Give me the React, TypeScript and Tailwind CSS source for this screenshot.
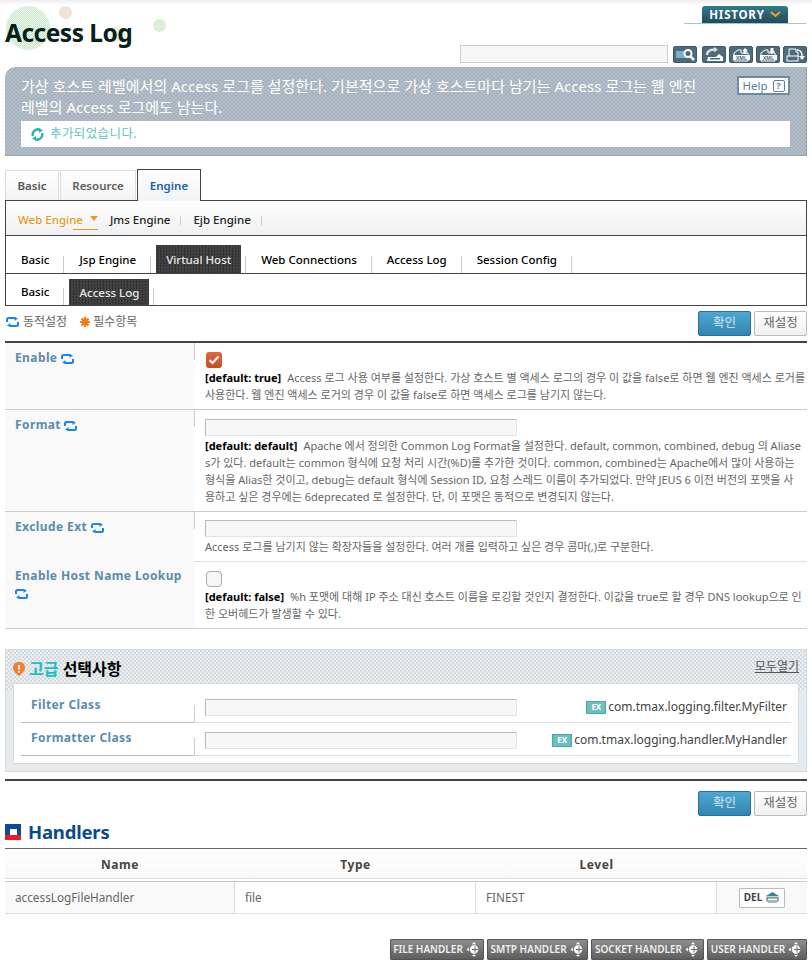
const SyncIcon = ({ color = "#1787f0", className = "" }: { color?: string; className?: string }) => (
  <svg viewBox="0 0 13 10" width="13" height="10" className={`inline-block shrink-0 ${className}`} fill="none">
    <path d="M1 5V2.500C1 1.700 1.500 1 2.500 1H9.500" stroke={color} strokeWidth="2" />
    <path d="M8.500 0L12 1.500 8.500 4Z" fill={color} />
    <path d="M12 5V7.500C12 8.300 11.500 9 10.500 9H3.500" stroke={color} strokeWidth="2" />
    <path d="M4.500 6L1 8.500 4.500 10Z" fill={color} />
  </svg>
);

const ToolBtn = ({ children, className = "w-[23px]" }: { children: React.ReactNode; className?: string }) => (
  <div className={`h-[17px] ${className} rounded-[2px] bg-[#4e6b7c] border border-[#3f5a6b] flex items-center justify-center`}>
    <svg viewBox="0 0 21 15" width="21" height="15" fill="none">{children}</svg>
  </div>
);

const XmlIcon = ({ up }: { up: boolean }) => (
  <>
    <path d="M3 14V6L7 3H10V6H17V14Z" fill="#4e6b7c" stroke="#fff" strokeWidth="1" />
    <rect x="2" y="8" width="17" height="5" fill="#fff" />
    <text x="10.500" y="12.500" textAnchor="middle" fontSize="5.500" fontWeight="700" fill="#4e6b7c" fontFamily="Liberation Sans, sans-serif">XML</text>
    <path d={up ? "M14 1L17 4H15.500V7H12.500V4H11Z" : "M14 7L17 4H15.500V1H12.500V4H11Z"} fill="#fff" />
  </>
);

const Toolbar = () => (
  <div className="flex items-center">
    <div className="w-[208px] h-[18px] bg-[#f7f7f7] border border-[#ccc]" />
    <ToolBtn className="w-[24px] ml-[5px]">
      <rect x="1" y="4" width="11" height="7" fill="#7ab0cf" />
      <circle cx="13" cy="6.500" r="3.500" stroke="#fff" strokeWidth="2" fill="#4e6b7c" />
      <path d="M15.500 9.500L19 13" stroke="#fff" strokeWidth="2.500" />
    </ToolBtn>
    <ToolBtn className="w-[24px] ml-[5px]">
      <path d="M3 8C3 4 6 2.500 11 2.500" stroke="#ddd" strokeWidth="2.500" />
      <path d="M10 0L14 2.500 10 5.500Z" fill="#ddd" />
      <path d="M4 10H19V14H3Z" fill="#fff" />
      <rect x="6" y="11" width="10" height="1.500" fill="#4e6b7c" />
      <path d="M15 7L19 10H12Z" fill="#fff" />
    </ToolBtn>
    <ToolBtn className="w-[24px] ml-[3px]"><XmlIcon up /></ToolBtn>
    <ToolBtn className="w-[24px] ml-[3px]"><XmlIcon up={false} /></ToolBtn>
    <ToolBtn className="w-[24px] ml-[3px]">
      <path d="M4 2H11V5H13V10H4Z" fill="#4e6b7c" stroke="#fff" />
      <rect x="2" y="9" width="11" height="5" fill="#4e6b7c" stroke="#fff" />
      <path d="M12 3C16 3 17 5 17 9" stroke="#fff" strokeWidth="1.500" />
      <path d="M14 9H20L17 13Z" fill="#fff" />
    </ToolBtn>
  </div>
);

const NavItem = ({ label, active, className = "" }: { label: string; active?: boolean; className?: string }) => (
  <div className={`flex items-end ${className}`}>
    {active ? (
      <span className="h-full px-[10px] pt-[2px] flex items-center bg-[repeating-conic-gradient(#333_0_25%,#474747_0_50%)] bg-[length:3px_3px] text-[#e8e8e8]">{label}</span>
    ) : (
      <span className="h-[26px] pl-[15px] flex items-center text-black">{label}</span>
    )}
    <span className={`w-px h-[17px] bg-[#ccc] ${active ? "ml-[4px]" : "ml-[14px]"}`} />
  </div>
);

const OkButtons = () => (
  <div className="flex justify-end gap-[3px] text-[12.500px]">
    <button className="w-[53px] h-[25px] rounded-[2px] border border-[#27729c] bg-linear-to-b from-[#4da7d1] to-[#3186b2] text-[#d5e8f2]">확인</button>
    <button className="w-[53px] h-[25px] rounded-[2px] border border-[#bbb] bg-linear-to-b from-white to-[#f0f0f0] text-[#666]">재설정</button>
  </div>
);

const Default = ({ text }: { text: string }) => (
  <span className="font-bold text-[11px] text-black mr-[6px]">[default: {text}]</span>
);

const Row = ({ label, height, border = true, children }: { label: React.ReactNode; height: string; border?: boolean; children: React.ReactNode }) => (
  <div className={`flex ${height} ${border ? "border-b border-[#ccc]" : ""}`}>
    <div className="w-[189px] bg-[#f9f9f9] pl-[10px] pt-[6px] text-[12px] font-bold text-[#5c8cab] tracking-[0.4px] leading-[17px]">{label}</div>
    <div className="w-px h-[17px] bg-[#ccc]" />
    <div className="flex-1 pl-[10px] text-[11px] text-[#666] leading-[17px]">{children}</div>
  </div>
);

const TextField = ({ className = "" }: { className?: string }) => (
  <div className={`w-[312px] h-[17px] bg-[#f7f7f7] border-t border-l border-[#bbb] border-r-[#e4e4e4] border-b-[#e4e4e4] border-r border-b ${className}`} />
);

const ExBadge = () => (
  <span className="inline-flex items-center justify-center w-[20px] h-[13px] bg-[#6cc0c0] border border-[#4ea5a5] text-white text-[8px] font-bold leading-none mr-[2px]">EX</span>
);

const AddBtn = ({ label, className }: { label: string; className: string }) => (
  <button className={`${className} h-[21px] border border-[#555] rounded-[1px] bg-linear-to-b from-[#8e8e8e] to-[#5e5e5e] text-[#f0f0f0] text-[10px] font-semibold flex items-center justify-center gap-[3px] whitespace-nowrap`}>
    {label}
    <svg viewBox="0 0 15 15" width="15" height="15" fill="#fff">
      <circle cx="8" cy="7.500" r="4.200" />
      <path d="M8 0L10 2.300H6ZM8 15L10 12.700H6ZM0.500 7.500L2.800 5.500V9.500Z" />
      <path d="M6 7.500H12M9 4.500V10.500" stroke="#666" strokeWidth="1" />
    </svg>
  </button>
);

export default function App() {
  return (
    <div className="w-[812px] h-[965px] overflow-hidden bg-white [font-family:'Noto_Sans','Noto_Sans_CJK_KR',sans-serif]">
      <div className="h-[5px] bg-linear-to-b from-[#eeeeee] to-white" />

      {/* header */}
      <div className="relative h-[62px] flex justify-between pl-[5px] pr-[5px]">
        <span className="absolute left-[6px] top-[1px] w-[44px] h-[44px] rounded-full bg-[repeating-conic-gradient(#c4e6c6_0_25%,#f2faf2_0_50%)] bg-[length:2px_2px]" />
        <span className="absolute left-[59px] top-[1px] w-[13px] h-[13px] rounded-full bg-[#efe3d8]" />
        <span className="absolute left-[153px] top-[14px] w-[13px] h-[13px] rounded-full bg-[#d9efd6]" />
        <span className="absolute left-[110px] top-[21px] w-[16px] h-[16px] rounded-full bg-[#eef4de]" />
        <h1 className="relative mt-[11px] text-[24.500px] font-bold leading-[34px] text-[#06201a] tracking-[-0.5px]">Access Log</h1>
        <div className="flex flex-col items-end">
          <div className="mr-[1px] mt-px w-[122px] h-[18px] border-b border-[#9fc8cc] pl-[18px]">
            <div className="w-[86px] h-[17px] rounded-t-[3px] bg-linear-to-b from-[#2f7c8f] to-[#234a58] flex items-center justify-center gap-[5px] text-white text-[11.500px] font-bold tracking-[0.8px]">
              HISTORY
              <svg viewBox="0 0 11 7" width="11" height="7" fill="none"><path d="M1 1L5.500 5L10 1" stroke="#f4a11e" strokeWidth="2" /></svg>
            </div>
          </div>
          <div className="mt-[21px]"><Toolbar /></div>
        </div>
      </div>

      {/* description */}
      <div className="mx-[5px] h-[89px] rounded-tl-[10px] border-r border-b border-[#98a5b1] bg-[repeating-conic-gradient(#a5b1bc_0_25%,#b4bfc9_0_50%)] bg-[length:4px_4px] pt-[9px] px-[16px]">
        <div className="flex justify-between">
          <p className="text-[15px] leading-[21px] text-white tracking-[0.04px] whitespace-nowrap">
            가상 호스트 레벨에서의 Access 로그를 설정한다. 기본적으로 가상 호스트마다 남기는 Access 로그는 웹 엔진<br />
            레벨의 Access 로그에도 남는다.
          </p>
          <div className="w-[53px] h-[19px] bg-white border-2 border-[#6b8aa5] flex items-center justify-center gap-[5px] text-[11.500px] text-[#5f7f9c]">
            Help
            <span className="w-[12px] h-[12px] border border-[#5f7f9c] rounded-[2px] flex items-center justify-center text-[9px] font-bold leading-none">?</span>
          </div>
        </div>
        <div className="mt-[3px] h-[26px] bg-white flex items-center pl-[10px] gap-[6px] text-[12.500px] text-[#62c4c0] tracking-[0.4px]">
          <svg viewBox="0 0 13 13" width="13" height="13" fill="none">
            <path d="M2 8A5 5 0 0 1 9 2" stroke="#2fb5ad" strokeWidth="2.500" />
            <path d="M11 5A5 5 0 0 1 4 11" stroke="#2fb5ad" strokeWidth="2.500" />
            <path d="M8 0L12 2.500 8 5ZM5 13L1 10.500 5 8Z" fill="#2fb5ad" />
          </svg>
          추가되었습니다.
        </div>
      </div>

      {/* main tabs */}
      <div className="mt-[13px] mx-[5px] flex items-end gap-[1px] h-[31px] text-[11.500px] font-semibold">
        <div className="w-[54px] h-[30px] border border-b-0 border-[#ddd] bg-linear-to-b from-white to-[#f1f3f5] text-[#555] flex items-center justify-center">Basic</div>
        <div className="w-[76px] h-[30px] border border-b-0 border-[#ddd] bg-linear-to-b from-white to-[#f1f3f5] text-[#665c55] flex items-center justify-center">Resource</div>
        <div className="w-[64px] h-[32px] relative top-px z-10 border border-b-0 border-[#444] bg-linear-to-b from-white to-[#f1f3f5] text-[#1560b0] flex items-center justify-center">Engine</div>
      </div>

      {/* nav box */}
      <div className="mx-[5px] border border-[#444] text-[11.500px] font-medium">
        <div className="h-[34px] bg-linear-to-b from-white to-[#eef0f2] flex items-center pl-[12px] pt-[4px]">
          <span className="text-[#e89c1c]">Web Engine</span>
          <span className="-ml-[10px] w-[25px] h-[19px] border-b border-[#e89c1c] flex justify-end">
            <span className="mt-[5px] w-0 h-0 border-x-[4px] border-x-transparent border-t-[5px] border-t-[#e89c1c]" />
          </span>
          <span className="ml-[12px] text-[#222]">Jms Engine</span>
          <span className="ml-[10px] w-px h-[9px] bg-[#ccc]" />
          <span className="ml-[12px] text-[#222]">Ejb Engine</span>
          <span className="ml-[10px] w-px h-[9px] bg-[#ccc]" />
        </div>
        <div className="h-[38px] border-t border-[#444] flex items-end pt-[9px]">
          <NavItem label="Basic" />
          <NavItem label="Jsp Engine" />
          <NavItem label="Virtual Host" active className="ml-[5px] h-full" />
          <NavItem label="Web Connections" />
          <NavItem label="Access Log" />
          <NavItem label="Session Config" />
        </div>
        <div className="h-[32px] border-t border-[#444] flex items-end pt-[5px]">
          <NavItem label="Basic" />
          <NavItem label="Access Log" active className="ml-[5px] h-full" />
        </div>
      </div>

      {/* legend */}
      <div className="mx-[5px] mt-[5px] flex justify-between">
        <div className="flex items-center h-[22px] text-[12px] text-[#666]">
          <SyncIcon className="ml-[1px] mr-[4px]" />
          동적설정
          <svg viewBox="0 0 10 10" width="10" height="10" className="ml-[13px] mr-[3px]">
            <path d="M5 0V10M0 5H10M1.500 1.500L8.500 8.500M8.500 1.500L1.500 8.500" stroke="#f07c10" strokeWidth="2.200" />
          </svg>
          필수항목
        </div>
        <OkButtons />
      </div>

      {/* settings */}
      <div className="mx-[5px] mt-[5px] border-t-2 border-[#444]">
        <Row height="h-[67px]" label={<>Enable <SyncIcon /></>}>
          <div className="mt-[9px] ml-[1px] w-[16px] h-[16px] rounded-[3px] bg-linear-to-b from-[#d96a3c] to-[#c24f24] flex items-center justify-center">
            <svg viewBox="0 0 12 10" width="12" height="10" fill="none"><path d="M1.500 5L4.500 8L10.500 1.500" stroke="#fff" strokeWidth="2.200" /></svg>
          </div>
          <p className="mt-[1px] whitespace-nowrap"><Default text="true" />Access 로그 사용 여부를 설정한다. 가상 호스트 별 액세스 로그의 경우 이 값을 false로 하면 웹 엔진 액세스 로거를</p>
          <p className="whitespace-nowrap">사용한다. 웹 엔진 액세스 로거의 경우 이 값을 false로 하면 액세스 로그를 남기지 않는다.</p>
        </Row>
        <Row height="h-[102px]" label={<>Format <SyncIcon /></>}>
          <TextField className="mt-[9px]" />
          <p className="mt-[1px] whitespace-nowrap"><Default text="default" />Apache 에서 정의한 Common Log Format을 설정한다. default, common, combined, debug 의 Aliase</p>
          <p className="whitespace-nowrap">s가 있다. default는 common 형식에 요청 처리 시간(%D)를 추가한 것이다. common, combined는 Apache에서 많이 사용하는</p>
          <p className="whitespace-nowrap">형식을 Alias한 것이고, debug는 default 형식에 Session ID, 요청 스레드 이름이 추가되었다. 만약 JEUS 6 이전 버전의 포맷을 사</p>
          <p className="whitespace-nowrap">용하고 싶은 경우에는 6deprecated 로 설정한다. 단, 이 포맷은 동적으로 변경되지 않는다.</p>
        </Row>
        <Row height="h-[49px]" border={false} label={<>Exclude Ext <SyncIcon /></>}>
          <TextField className="mt-[8px]" />
          <p className="mt-[1px] whitespace-nowrap">Access 로그를 남기지 않는 확장자들을 설정한다. 여러 개를 입력하고 싶은 경우 콤마(,)로 구분한다.</p>
        </Row>
        <div className="flex h-[68px] border-b border-[#ccc]">
          <div className="w-[190px] bg-[#f9f9f9] pl-[10px] pt-[6px] text-[12px] font-bold text-[#5c8cab] tracking-[0.4px] leading-[17px] whitespace-nowrap">
            Enable Host Name Lookup<br /><SyncIcon />
          </div>
          <div className="flex-1 border-t border-[#ddd] pl-[10px] text-[11px] text-[#666] leading-[17px]">
            <div className="mt-[9px] ml-[1px] w-[16px] h-[16px] rounded-[4px] border border-[#aaa] bg-[#f6f6f6]" />
            <p className="mt-[1px] whitespace-nowrap"><Default text="false" />%h 포맷에 대해 IP 주소 대신 호스트 이름을 로깅할 것인지 결정한다. 이값을 true로 할 경우 DNS lookup으로 인</p>
            <p className="whitespace-nowrap">한 오버헤드가 발생할 수 있다.</p>
          </div>
        </div>
      </div>

      {/* advanced */}
      <div className="mx-[5px] mt-[20px] h-[123px] border border-[#d5dadf] bg-[#e8ebee]">
        <div className="h-[40px] bg-[repeating-conic-gradient(#d5dade_0_25%,#eceff1_0_50%)] bg-[length:4px_4px] flex justify-between pl-[7px] pr-[7px] pt-[8px]">
          <div className="flex items-center h-[22px] gap-[4px] font-bold text-[16px]">
            <svg viewBox="0 0 12 14" width="12" height="14">
              <path d="M6 0C10 0 12 2 12 6C12 9 9 11 6 14C3 11 0 9 0 6C0 2 2 0 6 0Z" fill="#f08030" />
              <path d="M6 3V7.500M6 9V10.500" stroke="#fff" strokeWidth="2" />
            </svg>
            <span><span className="text-[#1cc0bc]">고급</span> <span className="text-black">선택사항</span></span>
          </div>
          <span className="text-[12px] text-[#555] underline h-[20px]">모두열기</span>
        </div>
        <div className="-mt-[7px] relative mx-[7px] h-[81px] bg-white border border-[#d5dadf] px-[7px] pt-[6px]">
          {[
            { name: "Filter Class", example: "com.tmax.logging.filter.MyFilter" },
            { name: "Formatter Class", example: "com.tmax.logging.handler.MyHandler" },
          ].map((row) => (
            <div key={row.name} className="flex h-[33px] border-b border-[#ddd]">
              <div className="w-[173px] pl-[10px] pt-[6px] border-b border-[#bbb] -mb-px text-[12px] font-bold text-[#5c8cab] tracking-[0.4px] leading-[17px]">{row.name}</div>
              <div className="w-px h-[17px] mt-[15px] bg-[#ccc]" />
              <div className="flex-1 pl-[10px] pt-[9px] flex justify-between">
                <TextField />
                <span className="pr-[4px] -mt-[2px] text-[12px] text-[#444] flex items-center h-[20px] whitespace-nowrap"><ExBadge />{row.example}</span>
              </div>
            </div>
          ))}
        </div>
      </div>

      <div className="mx-[5px] mt-[7px] border-t-2 border-[#444]" />
      <div className="mx-[5px] mt-[10px]"><OkButtons /></div>

      {/* handlers */}
      <div className="mx-[5px] h-[32px] flex items-center gap-[7px]">
        <svg viewBox="0 0 16 16" width="16" height="16">
          <rect width="16" height="11" fill="#0a4a96" />
          <rect y="11" width="16" height="5" fill="#e8192c" />
          <rect x="5" y="5" width="7" height="6" fill="#fff" />
        </svg>
        <h2 className="text-[18.500px] font-bold text-[#0a4a8c] tracking-[-0.2px]">Handlers</h2>
      </div>
      <div className="mx-[5px] border-t border-[#666]">
        <div className="h-[30px] pt-[3px] grid grid-cols-[230px_241px_241px_90px] items-center text-center text-[12px] font-bold text-[#4a4340] tracking-[0.6px] bg-linear-to-b from-white to-[#f8f8f8] border-b border-[#ddd]">
          <span>Name</span>
          <span>Type</span>
          <span>Level</span>
          <span />
        </div>
        <div className="h-[33px] mt-[2px] border-t border-b border-t-[#ccc] border-b-[#ddd] grid grid-cols-[230px_241px_241px_90px] text-[11.750px] text-[#666]">
          <div className="bg-[#f9f9f9] border-r border-[#ddd] flex items-center pl-[10px] pt-px">accessLogFileHandler</div>
          <div className="border-r border-[#ddd] flex items-center pl-[10px] pt-px">file</div>
          <div className="border-r border-[#ddd] flex items-center pl-[10px] pt-px">FINEST</div>
          <div className="bg-[#f9f9f9] flex items-center justify-center">
            <button className="w-[46px] h-[20px] bg-white border border-[#bbb] rounded-[1px] flex items-center justify-center gap-[3px] text-[10px] font-bold text-[#444]">
              DEL
              <svg viewBox="0 0 15 12" width="15" height="12">
                <path d="M7.500 0L14 4H1Z" fill="#3f7f96" />
                <path d="M1 5H14M1 7H14" stroke="#6fb0c0" />
                <rect x="2" y="6" width="11" height="3" fill="#fff" stroke="#444" strokeWidth="0.800" />
                <path d="M3 10.500H12" stroke="#7cc" />
              </svg>
            </button>
          </div>
        </div>
      </div>

      {/* add handler buttons */}
      <div className="mx-[5px] mt-[25px] flex justify-end gap-[3px]">
        <AddBtn label="FILE HANDLER" className="w-[94px]" />
        <AddBtn label="SMTP HANDLER" className="w-[101px]" />
        <AddBtn label="SOCKET HANDLER" className="w-[113px]" />
        <AddBtn label="USER HANDLER" className="w-[100px]" />
      </div>
    </div>
  );
}
